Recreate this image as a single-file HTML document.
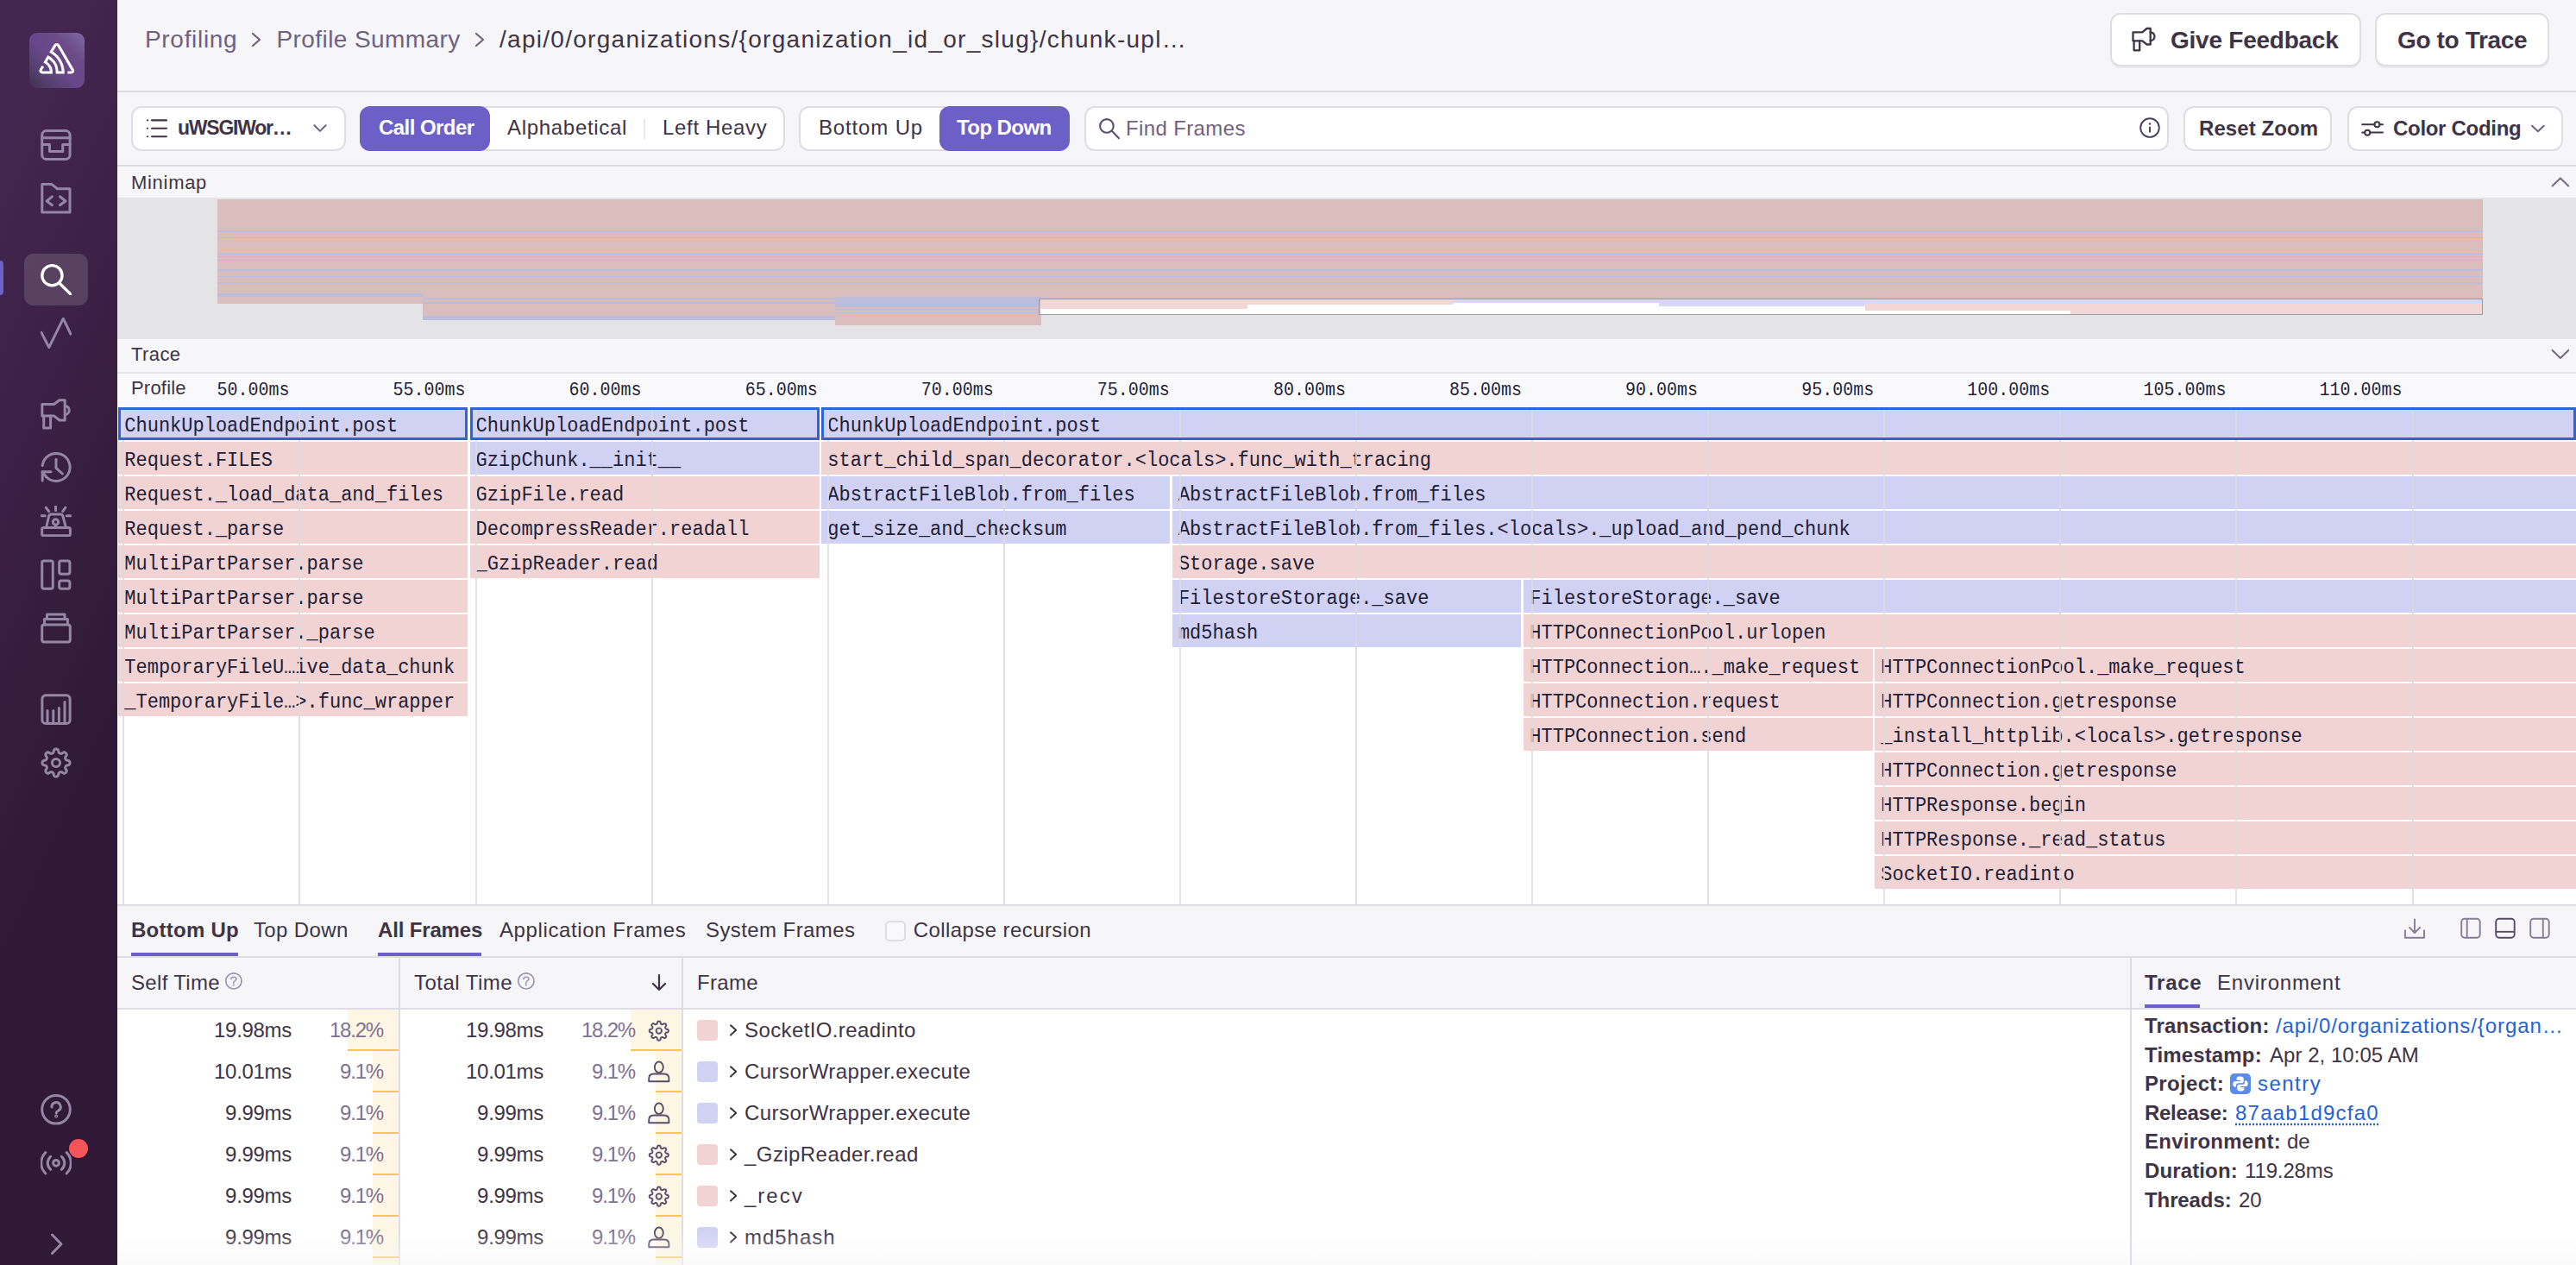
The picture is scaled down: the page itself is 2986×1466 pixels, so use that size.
<!DOCTYPE html>
<html><head><meta charset="utf-8"><title>Profiling</title>
<style>
html,body{margin:0;padding:0;width:2986px;height:1466px;overflow:hidden;background:#ffffff;}
body{position:relative;font-family:'Liberation Sans',sans-serif;}
</style></head><body>
<div style="position:absolute;left:136px;top:0px;width:2850px;height:106px;background:#f6f6f8;"></div>
<div style="position:absolute;left:136px;top:105px;width:2850px;height:2px;background:#e0dce5;"></div>
<div style="position:absolute;left:136px;top:107px;width:2850px;height:85px;background:#f6f6f8;"></div>
<div style="position:absolute;left:136px;top:191px;width:2850px;height:2px;background:#e0dce5;"></div>
<div style="position:absolute;left:168.0px;top:31.7px;font-family:'Liberation Sans', sans-serif;font-size:28px;line-height:28px;font-weight:400;color:#6f6180;white-space:pre;letter-spacing:0.686px;">Profiling</div>
<svg style="position:absolute;left:290px;top:37px;" width="14" height="18" viewBox="0 0 14 18"><path d="M3 2 L11 9 L3 16" fill="none" stroke="#6f6180" stroke-width="2.2" stroke-linecap="round" stroke-linejoin="round"/></svg>
<div style="position:absolute;left:320.5px;top:31.7px;font-family:'Liberation Sans', sans-serif;font-size:28px;line-height:28px;font-weight:400;color:#6f6180;white-space:pre;letter-spacing:0.416px;">Profile Summary</div>
<svg style="position:absolute;left:549px;top:37px;" width="14" height="18" viewBox="0 0 14 18"><path d="M3 2 L11 9 L3 16" fill="none" stroke="#6f6180" stroke-width="2.2" stroke-linecap="round" stroke-linejoin="round"/></svg>
<div style="position:absolute;left:579.0px;top:31.7px;font-family:'Liberation Sans', sans-serif;font-size:28px;line-height:28px;font-weight:400;color:#3e3446;white-space:pre;letter-spacing:1.284px;">/api/0/organizations/{organization_id_or_slug}/chunk-upl…</div>
<div style="position:absolute;left:2446px;top:15px;width:287px;height:58px;border:2px solid #e0dce5;border-radius:12px;background:#fff;box-shadow:0 2px 0 rgba(43,34,51,0.06);"></div>
<svg style="position:absolute;left:2470px;top:31px;" width="30" height="30" viewBox="0 0 30 30"><g fill="none" stroke="#3e3446" stroke-width="2.3" stroke-linejoin="round" stroke-linecap="round"><path d="M2.5 6.3 H13.3 L18.5 2 H22.7 V20.5 H18.5 L13.3 16.4 H2.5 Z"/><path d="M3.6 16.4 V27.3 H10.2 V16.4"/><path d="M22.7 6.5 A4.8 4.8 0 0 1 22.7 16.1"/></g></svg>
<div style="position:absolute;left:2516.0px;top:33.2px;font-family:'Liberation Sans', sans-serif;font-size:28px;line-height:28px;font-weight:700;color:#3e3446;white-space:pre;letter-spacing:-0.241px;">Give Feedback</div>
<div style="position:absolute;left:2753px;top:15px;width:198px;height:58px;border:2px solid #e0dce5;border-radius:12px;background:#fff;box-shadow:0 2px 0 rgba(43,34,51,0.06);"></div>
<div style="position:absolute;left:2779.0px;top:33.2px;font-family:'Liberation Sans', sans-serif;font-size:28px;line-height:28px;font-weight:700;color:#3e3446;white-space:pre;letter-spacing:-0.359px;">Go to Trace</div>
<div style="position:absolute;left:152px;top:123px;width:245px;height:48px;border:2px solid #e0dce5;border-radius:12px;background:#fff;"></div>
<svg style="position:absolute;left:168px;top:136px;" width="28" height="26" viewBox="0 0 28 26"><g stroke="#3e3446" stroke-width="2.1" stroke-linecap="round"><line x1="3" y1="3.4" x2="3.05" y2="3.4"/><line x1="3" y1="12.8" x2="3.05" y2="12.8"/><line x1="3" y1="22.3" x2="3.05" y2="22.3"/><line x1="8" y1="3.4" x2="25" y2="3.4"/><line x1="8" y1="12.8" x2="25" y2="12.8"/><line x1="8" y1="22.3" x2="25" y2="22.3"/></g></svg>
<div style="position:absolute;left:206.0px;top:137.4px;font-family:'Liberation Sans', sans-serif;font-size:23px;line-height:23px;font-weight:700;color:#3e3446;white-space:pre;letter-spacing:-1.233px;">uWSGIWor…</div>
<svg style="position:absolute;left:363px;top:144px;" width="16" height="11" viewBox="0 0 16 11"><path d="M1.4 1.2 L8 7.9 L14.6 1.2" fill="none" stroke="#6f6280" stroke-width="2" stroke-linecap="round" stroke-linejoin="round"/></svg>
<div style="position:absolute;left:417px;top:123px;width:489px;height:48px;border:2px solid #e0dce5;border-radius:12px;background:#fff;"></div>
<div style="position:absolute;left:417px;top:123px;width:151px;height:52px;border-radius:12px;background:#6c5fc7;"></div>
<div style="position:absolute;left:439.0px;top:135.6px;font-family:'Liberation Sans', sans-serif;font-size:24px;line-height:24px;font-weight:700;color:#fff;white-space:pre;letter-spacing:-0.552px;">Call Order</div>
<div style="position:absolute;left:588.0px;top:135.6px;font-family:'Liberation Sans', sans-serif;font-size:24px;line-height:24px;font-weight:400;color:#3e3446;white-space:pre;letter-spacing:0.692px;">Alphabetical</div>
<div style="position:absolute;left:746px;top:138px;width:2px;height:23px;background:#ebe6ef;"></div>
<div style="position:absolute;left:768.0px;top:135.6px;font-family:'Liberation Sans', sans-serif;font-size:24px;line-height:24px;font-weight:400;color:#3e3446;white-space:pre;letter-spacing:0.672px;">Left Heavy</div>
<div style="position:absolute;left:926px;top:123px;width:310px;height:48px;border:2px solid #e0dce5;border-radius:12px;background:#fff;"></div>
<div style="position:absolute;left:1089px;top:123px;width:151px;height:52px;border-radius:12px;background:#6c5fc7;"></div>
<div style="position:absolute;left:949.0px;top:135.6px;font-family:'Liberation Sans', sans-serif;font-size:24px;line-height:24px;font-weight:400;color:#3e3446;white-space:pre;letter-spacing:0.849px;">Bottom Up</div>
<div style="position:absolute;left:1109.0px;top:135.6px;font-family:'Liberation Sans', sans-serif;font-size:24px;line-height:24px;font-weight:700;color:#fff;white-space:pre;letter-spacing:-0.572px;">Top Down</div>
<div style="position:absolute;left:1257px;top:123px;width:1253px;height:48px;border:2px solid #e0dce5;border-radius:12px;background:#fff;"></div>
<svg style="position:absolute;left:1272px;top:136px;" width="28" height="26" viewBox="0 0 28 26"><g fill="none" stroke="#5c4f6e" stroke-width="2.1" stroke-linecap="round"><circle cx="10.9" cy="9.9" r="7.8"/><line x1="16.6" y1="15.6" x2="25" y2="24.2"/></g></svg>
<div style="position:absolute;left:1305.0px;top:136.6px;font-family:'Liberation Sans', sans-serif;font-size:24px;line-height:24px;font-weight:400;color:#6f6180;white-space:pre;letter-spacing:0.368px;">Find Frames</div>
<svg style="position:absolute;left:2479px;top:136px;" width="26" height="26" viewBox="0 0 26 26"><circle cx="13" cy="12.1" r="10.8" fill="none" stroke="#4e4160" stroke-width="1.9"/><rect x="12" y="10.4" width="2" height="7.4" rx="1" fill="#4e4160"/><circle cx="13" cy="7.4" r="1.25" fill="#4e4160"/></svg>
<div style="position:absolute;left:2531px;top:123px;width:168px;height:48px;border:2px solid #e0dce5;border-radius:12px;background:#fff;"></div>
<div style="position:absolute;left:2549.0px;top:136.6px;font-family:'Liberation Sans', sans-serif;font-size:24px;line-height:24px;font-weight:700;color:#3e3446;white-space:pre;letter-spacing:0.080px;">Reset Zoom</div>
<div style="position:absolute;left:2721px;top:123px;width:246px;height:48px;border:2px solid #e0dce5;border-radius:12px;background:#fff;"></div>
<svg style="position:absolute;left:2735px;top:138px;" width="30" height="24" viewBox="0 0 30 24"><g fill="none" stroke="#3e3446" stroke-width="2" stroke-linecap="round"><line x1="3.2" y1="6.2" x2="17.4" y2="6.2"/><line x1="23.4" y1="6.2" x2="27" y2="6.2"/><line x1="3.2" y1="15.6" x2="6.2" y2="15.6"/><line x1="12.2" y1="15.6" x2="27" y2="15.6"/></g><circle cx="20.4" cy="6.2" r="3" fill="none" stroke="#3e3446" stroke-width="2"/><circle cx="9.2" cy="15.8" r="3" fill="none" stroke="#3e3446" stroke-width="2"/></svg>
<div style="position:absolute;left:2774.0px;top:136.6px;font-family:'Liberation Sans', sans-serif;font-size:24px;line-height:24px;font-weight:700;color:#3e3446;white-space:pre;letter-spacing:-0.299px;">Color Coding</div>
<svg style="position:absolute;left:2933px;top:144px;" width="18" height="11" viewBox="0 0 18 11"><path d="M2 1.8 L8.9 8.3 L15.8 1.8" fill="none" stroke="#6f6280" stroke-width="2" stroke-linecap="round" stroke-linejoin="round"/></svg>
<div style="position:absolute;left:136px;top:193px;width:2850px;height:36px;background:#f7f7f9;"></div>
<div style="position:absolute;left:152.0px;top:201.3px;font-family:'Liberation Sans', sans-serif;font-size:22px;line-height:22px;font-weight:400;color:#3e3446;white-space:pre;letter-spacing:0.700px;">Minimap</div>
<svg style="position:absolute;left:2956px;top:203px;" width="24" height="16" viewBox="0 0 24 16"><path d="M2.6 12.4 L11.9 3.4 L21.2 12.4" fill="none" stroke="#776a86" stroke-width="2.1" stroke-linecap="round" stroke-linejoin="round"/></svg>
<div style="position:absolute;left:136px;top:229px;width:2850px;height:164px;background:#e4e4e7;"></div>
<div style="position:absolute;left:252px;top:231px;width:2626px;height:121px;background:#dabdbd;"></div>
<div style="position:absolute;left:252px;top:267px;width:2626px;height:2px;background:#bcbcdc;"></div>
<div style="position:absolute;left:252px;top:275px;width:2626px;height:1px;background:#bcbcdc;"></div>
<div style="position:absolute;left:252px;top:294px;width:2626px;height:1px;background:#bcbcdc;"></div>
<div style="position:absolute;left:252px;top:297px;width:2626px;height:1px;background:#bcbcdc;"></div>
<div style="position:absolute;left:252px;top:301px;width:2626px;height:1px;background:#bcbcdc;"></div>
<div style="position:absolute;left:252px;top:312px;width:2626px;height:2px;background:#bcbcdc;"></div>
<div style="position:absolute;left:252px;top:320px;width:2626px;height:1px;background:#bcbcdc;"></div>
<div style="position:absolute;left:252px;top:327px;width:2626px;height:2px;background:#bcbcdc;"></div>
<div style="position:absolute;left:252px;top:340px;width:238px;height:4px;background:#bcbcdc;"></div>
<div style="position:absolute;left:490px;top:352px;width:478px;height:19px;background:#dabdbd;"></div>
<div style="position:absolute;left:490px;top:345px;width:2388px;height:2px;background:#bcbcdc;"></div>
<div style="position:absolute;left:490px;top:350px;width:2388px;height:2px;background:#bcbcdc;"></div>
<div style="position:absolute;left:490px;top:366px;width:478px;height:5px;background:#bcbcdc;"></div>
<div style="position:absolute;left:968px;top:344px;width:239px;height:12px;background:#bcbcdc;"></div>
<div style="position:absolute;left:968px;top:356px;width:239px;height:21px;background:#dabdbd;"></div>
<div style="position:absolute;left:968px;top:358px;width:239px;height:2px;background:#bcbcdc;"></div>
<div style="position:absolute;left:968px;top:362px;width:239px;height:1px;background:#bcbcdc;"></div>
<div style="position:absolute;left:1206px;top:347px;width:1672px;height:18px;background:#f3d6d6;"></div>
<div style="position:absolute;left:1206px;top:358px;width:240px;height:7px;background:#fff;"></div>
<div style="position:absolute;left:1446px;top:353px;width:239px;height:12px;background:#fff;"></div>
<div style="position:absolute;left:1685px;top:347px;width:238px;height:4px;background:#d8d8f4;"></div>
<div style="position:absolute;left:1685px;top:351px;width:238px;height:14px;background:#fff;"></div>
<div style="position:absolute;left:1923px;top:347px;width:239px;height:8px;background:#d8d8f4;"></div>
<div style="position:absolute;left:1923px;top:355px;width:239px;height:10px;background:#fff;"></div>
<div style="position:absolute;left:2162px;top:347px;width:716px;height:4px;background:#d8d8f4;"></div>
<div style="position:absolute;left:2162px;top:360px;width:238px;height:5px;background:#fff;"></div>
<div style="position:absolute;left:1204px;top:346px;width:1672px;height:17px;border:1.5px solid #a09aa8;"></div>
<div style="position:absolute;left:136px;top:393px;width:2850px;height:38px;background:#f7f7f9;"></div>
<div style="position:absolute;left:152.0px;top:400.3px;font-family:'Liberation Sans', sans-serif;font-size:22px;line-height:22px;font-weight:400;color:#3e3446;white-space:pre;letter-spacing:0.405px;">Trace</div>
<svg style="position:absolute;left:2956px;top:402px;" width="24" height="16" viewBox="0 0 24 16"><path d="M2.6 3.9 L11.9 12.9 L21.2 3.9" fill="none" stroke="#776a86" stroke-width="2.1" stroke-linecap="round" stroke-linejoin="round"/></svg>
<div style="position:absolute;left:136px;top:431px;width:2850px;height:2px;background:#e7e5ea;"></div>
<div style="position:absolute;left:136px;top:433px;width:2850px;height:38px;background:#f9f9fb;"></div>
<div style="position:absolute;left:152.0px;top:439.3px;font-family:'Liberation Sans', sans-serif;font-size:22px;line-height:22px;font-weight:400;color:#3e3446;white-space:pre;letter-spacing:0.197px;">Profile</div>
<div style="position:absolute;left:251.4px;top:443.0px;font-family:'Liberation Mono', monospace;font-size:20px;line-height:20px;font-weight:400;color:#1f2237;white-space:pre;transform:scaleY(1.08);transform-origin:0 15.2px;">50.00ms</div>
<div style="position:absolute;left:455.5px;top:443.0px;font-family:'Liberation Mono', monospace;font-size:20px;line-height:20px;font-weight:400;color:#1f2237;white-space:pre;transform:scaleY(1.08);transform-origin:0 15.2px;">55.00ms</div>
<div style="position:absolute;left:659.6px;top:443.0px;font-family:'Liberation Mono', monospace;font-size:20px;line-height:20px;font-weight:400;color:#1f2237;white-space:pre;transform:scaleY(1.08);transform-origin:0 15.2px;">60.00ms</div>
<div style="position:absolute;left:863.7px;top:443.0px;font-family:'Liberation Mono', monospace;font-size:20px;line-height:20px;font-weight:400;color:#1f2237;white-space:pre;transform:scaleY(1.08);transform-origin:0 15.2px;">65.00ms</div>
<div style="position:absolute;left:1067.8px;top:443.0px;font-family:'Liberation Mono', monospace;font-size:20px;line-height:20px;font-weight:400;color:#1f2237;white-space:pre;transform:scaleY(1.08);transform-origin:0 15.2px;">70.00ms</div>
<div style="position:absolute;left:1271.8px;top:443.0px;font-family:'Liberation Mono', monospace;font-size:20px;line-height:20px;font-weight:400;color:#1f2237;white-space:pre;transform:scaleY(1.08);transform-origin:0 15.2px;">75.00ms</div>
<div style="position:absolute;left:1475.9px;top:443.0px;font-family:'Liberation Mono', monospace;font-size:20px;line-height:20px;font-weight:400;color:#1f2237;white-space:pre;transform:scaleY(1.08);transform-origin:0 15.2px;">80.00ms</div>
<div style="position:absolute;left:1680.0px;top:443.0px;font-family:'Liberation Mono', monospace;font-size:20px;line-height:20px;font-weight:400;color:#1f2237;white-space:pre;transform:scaleY(1.08);transform-origin:0 15.2px;">85.00ms</div>
<div style="position:absolute;left:1884.1px;top:443.0px;font-family:'Liberation Mono', monospace;font-size:20px;line-height:20px;font-weight:400;color:#1f2237;white-space:pre;transform:scaleY(1.08);transform-origin:0 15.2px;">90.00ms</div>
<div style="position:absolute;left:2088.2px;top:443.0px;font-family:'Liberation Mono', monospace;font-size:20px;line-height:20px;font-weight:400;color:#1f2237;white-space:pre;transform:scaleY(1.08);transform-origin:0 15.2px;">95.00ms</div>
<div style="position:absolute;left:2280.3px;top:443.0px;font-family:'Liberation Mono', monospace;font-size:20px;line-height:20px;font-weight:400;color:#1f2237;white-space:pre;transform:scaleY(1.08);transform-origin:0 15.2px;">100.00ms</div>
<div style="position:absolute;left:2484.4px;top:443.0px;font-family:'Liberation Mono', monospace;font-size:20px;line-height:20px;font-weight:400;color:#1f2237;white-space:pre;transform:scaleY(1.08);transform-origin:0 15.2px;">105.00ms</div>
<div style="position:absolute;left:2688.5px;top:443.0px;font-family:'Liberation Mono', monospace;font-size:20px;line-height:20px;font-weight:400;color:#1f2237;white-space:pre;transform:scaleY(1.08);transform-origin:0 15.2px;">110.00ms</div>
<div style="position:absolute;left:136px;top:471px;width:2850px;height:577px;background:#ffffff;"></div>
<div style="position:absolute;left:137.3px;top:472px;width:404.6px;height:38px;background:#d1d1f4;"></div>
<div style="position:absolute;left:544.6px;top:472px;width:405.2px;height:38px;background:#d1d1f4;"></div>
<div style="position:absolute;left:952.3px;top:472px;width:2033.7px;height:38px;background:#d1d1f4;"></div>
<div style="position:absolute;left:137.3px;top:512px;width:404.6px;height:38px;background:#f2d3d3;"></div>
<div style="position:absolute;left:544.6px;top:512px;width:405.2px;height:38px;background:#d1d1f4;"></div>
<div style="position:absolute;left:952.3px;top:512px;width:2033.7px;height:38px;background:#f2d3d3;"></div>
<div style="position:absolute;left:137.3px;top:552px;width:404.6px;height:38px;background:#f2d3d3;"></div>
<div style="position:absolute;left:544.6px;top:552px;width:405.2px;height:38px;background:#f2d3d3;"></div>
<div style="position:absolute;left:952.3px;top:552px;width:404.2px;height:38px;background:#d1d1f4;"></div>
<div style="position:absolute;left:1358.9px;top:552px;width:1627.1px;height:38px;background:#d1d1f4;"></div>
<div style="position:absolute;left:137.3px;top:592px;width:404.6px;height:38px;background:#f2d3d3;"></div>
<div style="position:absolute;left:544.6px;top:592px;width:405.2px;height:38px;background:#f2d3d3;"></div>
<div style="position:absolute;left:952.3px;top:592px;width:404.2px;height:38px;background:#d1d1f4;"></div>
<div style="position:absolute;left:1358.9px;top:592px;width:1627.1px;height:38px;background:#d1d1f4;"></div>
<div style="position:absolute;left:137.3px;top:632px;width:404.6px;height:38px;background:#f2d3d3;"></div>
<div style="position:absolute;left:544.6px;top:632px;width:405.2px;height:38px;background:#f2d3d3;"></div>
<div style="position:absolute;left:1358.9px;top:632px;width:1627.1px;height:38px;background:#f2d3d3;"></div>
<div style="position:absolute;left:137.3px;top:672px;width:404.6px;height:38px;background:#f2d3d3;"></div>
<div style="position:absolute;left:1358.9px;top:672px;width:404.6px;height:38px;background:#d1d1f4;"></div>
<div style="position:absolute;left:1766.3px;top:672px;width:1219.7px;height:38px;background:#d1d1f4;"></div>
<div style="position:absolute;left:137.3px;top:712px;width:404.6px;height:38px;background:#f2d3d3;"></div>
<div style="position:absolute;left:1358.9px;top:712px;width:404.6px;height:38px;background:#d1d1f4;"></div>
<div style="position:absolute;left:1766.3px;top:712px;width:1219.7px;height:38px;background:#f2d3d3;"></div>
<div style="position:absolute;left:137.3px;top:752px;width:404.6px;height:38px;background:#f2d3d3;"></div>
<div style="position:absolute;left:1766.3px;top:752px;width:404.5px;height:38px;background:#f2d3d3;"></div>
<div style="position:absolute;left:2173.3px;top:752px;width:812.7px;height:38px;background:#f2d3d3;"></div>
<div style="position:absolute;left:137.3px;top:792px;width:404.6px;height:38px;background:#f2d3d3;"></div>
<div style="position:absolute;left:1766.3px;top:792px;width:404.5px;height:38px;background:#f2d3d3;"></div>
<div style="position:absolute;left:2173.3px;top:792px;width:812.7px;height:38px;background:#f2d3d3;"></div>
<div style="position:absolute;left:1766.3px;top:832px;width:404.5px;height:38px;background:#f2d3d3;"></div>
<div style="position:absolute;left:2173.3px;top:832px;width:812.7px;height:38px;background:#f2d3d3;"></div>
<div style="position:absolute;left:2173.3px;top:872px;width:812.7px;height:38px;background:#f2d3d3;"></div>
<div style="position:absolute;left:2173.3px;top:912px;width:812.7px;height:38px;background:#f2d3d3;"></div>
<div style="position:absolute;left:2173.3px;top:952px;width:812.7px;height:38px;background:#f2d3d3;"></div>
<div style="position:absolute;left:2173.3px;top:992px;width:812.7px;height:38px;background:#f2d3d3;"></div>
<div style="position:absolute;left:144.3px;top:483.9px;font-family:'Liberation Mono', monospace;font-size:22px;line-height:22px;font-weight:400;color:#1d2036;white-space:pre;transform:scaleY(1.06);transform-origin:0 16.7px;">ChunkUploadEndpoint.post</div>
<div style="position:absolute;left:551.6px;top:483.9px;font-family:'Liberation Mono', monospace;font-size:22px;line-height:22px;font-weight:400;color:#1d2036;white-space:pre;transform:scaleY(1.06);transform-origin:0 16.7px;">ChunkUploadEndpoint.post</div>
<div style="position:absolute;left:959.3px;top:483.9px;font-family:'Liberation Mono', monospace;font-size:22px;line-height:22px;font-weight:400;color:#1d2036;white-space:pre;transform:scaleY(1.06);transform-origin:0 16.7px;">ChunkUploadEndpoint.post</div>
<div style="position:absolute;left:144.3px;top:523.9px;font-family:'Liberation Mono', monospace;font-size:22px;line-height:22px;font-weight:400;color:#1d2036;white-space:pre;transform:scaleY(1.06);transform-origin:0 16.7px;">Request.FILES</div>
<div style="position:absolute;left:551.6px;top:523.9px;font-family:'Liberation Mono', monospace;font-size:22px;line-height:22px;font-weight:400;color:#1d2036;white-space:pre;transform:scaleY(1.06);transform-origin:0 16.7px;">GzipChunk.__init__</div>
<div style="position:absolute;left:959.3px;top:523.9px;font-family:'Liberation Mono', monospace;font-size:22px;line-height:22px;font-weight:400;color:#1d2036;white-space:pre;transform:scaleY(1.06);transform-origin:0 16.7px;">start_child_span_decorator.&lt;locals&gt;.func_with_tracing</div>
<div style="position:absolute;left:144.3px;top:563.9px;font-family:'Liberation Mono', monospace;font-size:22px;line-height:22px;font-weight:400;color:#1d2036;white-space:pre;transform:scaleY(1.06);transform-origin:0 16.7px;">Request._load_data_and_files</div>
<div style="position:absolute;left:551.6px;top:563.9px;font-family:'Liberation Mono', monospace;font-size:22px;line-height:22px;font-weight:400;color:#1d2036;white-space:pre;transform:scaleY(1.06);transform-origin:0 16.7px;">GzipFile.read</div>
<div style="position:absolute;left:959.3px;top:563.9px;font-family:'Liberation Mono', monospace;font-size:22px;line-height:22px;font-weight:400;color:#1d2036;white-space:pre;transform:scaleY(1.06);transform-origin:0 16.7px;">AbstractFileBlob.from_files</div>
<div style="position:absolute;left:1365.9px;top:563.9px;font-family:'Liberation Mono', monospace;font-size:22px;line-height:22px;font-weight:400;color:#1d2036;white-space:pre;transform:scaleY(1.06);transform-origin:0 16.7px;">AbstractFileBlob.from_files</div>
<div style="position:absolute;left:144.3px;top:603.9px;font-family:'Liberation Mono', monospace;font-size:22px;line-height:22px;font-weight:400;color:#1d2036;white-space:pre;transform:scaleY(1.06);transform-origin:0 16.7px;">Request._parse</div>
<div style="position:absolute;left:551.6px;top:603.9px;font-family:'Liberation Mono', monospace;font-size:22px;line-height:22px;font-weight:400;color:#1d2036;white-space:pre;transform:scaleY(1.06);transform-origin:0 16.7px;">DecompressReader.readall</div>
<div style="position:absolute;left:959.3px;top:603.9px;font-family:'Liberation Mono', monospace;font-size:22px;line-height:22px;font-weight:400;color:#1d2036;white-space:pre;transform:scaleY(1.06);transform-origin:0 16.7px;">get_size_and_checksum</div>
<div style="position:absolute;left:1365.9px;top:603.9px;font-family:'Liberation Mono', monospace;font-size:22px;line-height:22px;font-weight:400;color:#1d2036;white-space:pre;transform:scaleY(1.06);transform-origin:0 16.7px;">AbstractFileBlob.from_files.&lt;locals&gt;._upload_and_pend_chunk</div>
<div style="position:absolute;left:144.3px;top:643.9px;font-family:'Liberation Mono', monospace;font-size:22px;line-height:22px;font-weight:400;color:#1d2036;white-space:pre;transform:scaleY(1.06);transform-origin:0 16.7px;">MultiPartParser.parse</div>
<div style="position:absolute;left:551.6px;top:643.9px;font-family:'Liberation Mono', monospace;font-size:22px;line-height:22px;font-weight:400;color:#1d2036;white-space:pre;transform:scaleY(1.06);transform-origin:0 16.7px;">_GzipReader.read</div>
<div style="position:absolute;left:1365.9px;top:643.9px;font-family:'Liberation Mono', monospace;font-size:22px;line-height:22px;font-weight:400;color:#1d2036;white-space:pre;transform:scaleY(1.06);transform-origin:0 16.7px;">Storage.save</div>
<div style="position:absolute;left:144.3px;top:683.9px;font-family:'Liberation Mono', monospace;font-size:22px;line-height:22px;font-weight:400;color:#1d2036;white-space:pre;transform:scaleY(1.06);transform-origin:0 16.7px;">MultiPartParser.parse</div>
<div style="position:absolute;left:1365.9px;top:683.9px;font-family:'Liberation Mono', monospace;font-size:22px;line-height:22px;font-weight:400;color:#1d2036;white-space:pre;transform:scaleY(1.06);transform-origin:0 16.7px;">FilestoreStorage._save</div>
<div style="position:absolute;left:1773.3px;top:683.9px;font-family:'Liberation Mono', monospace;font-size:22px;line-height:22px;font-weight:400;color:#1d2036;white-space:pre;transform:scaleY(1.06);transform-origin:0 16.7px;">FilestoreStorage._save</div>
<div style="position:absolute;left:144.3px;top:723.9px;font-family:'Liberation Mono', monospace;font-size:22px;line-height:22px;font-weight:400;color:#1d2036;white-space:pre;transform:scaleY(1.06);transform-origin:0 16.7px;">MultiPartParser._parse</div>
<div style="position:absolute;left:1365.9px;top:723.9px;font-family:'Liberation Mono', monospace;font-size:22px;line-height:22px;font-weight:400;color:#1d2036;white-space:pre;transform:scaleY(1.06);transform-origin:0 16.7px;">md5hash</div>
<div style="position:absolute;left:1773.3px;top:723.9px;font-family:'Liberation Mono', monospace;font-size:22px;line-height:22px;font-weight:400;color:#1d2036;white-space:pre;transform:scaleY(1.06);transform-origin:0 16.7px;">HTTPConnectionPool.urlopen</div>
<div style="position:absolute;left:144.3px;top:763.9px;font-family:'Liberation Mono', monospace;font-size:22px;line-height:22px;font-weight:400;color:#1d2036;white-space:pre;transform:scaleY(1.06);transform-origin:0 16.7px;">TemporaryFileU…ive_data_chunk</div>
<div style="position:absolute;left:1773.3px;top:763.9px;font-family:'Liberation Mono', monospace;font-size:22px;line-height:22px;font-weight:400;color:#1d2036;white-space:pre;transform:scaleY(1.06);transform-origin:0 16.7px;">HTTPConnection…._make_request</div>
<div style="position:absolute;left:2180.3px;top:763.9px;font-family:'Liberation Mono', monospace;font-size:22px;line-height:22px;font-weight:400;color:#1d2036;white-space:pre;transform:scaleY(1.06);transform-origin:0 16.7px;">HTTPConnectionPool._make_request</div>
<div style="position:absolute;left:144.3px;top:803.9px;font-family:'Liberation Mono', monospace;font-size:22px;line-height:22px;font-weight:400;color:#1d2036;white-space:pre;transform:scaleY(1.06);transform-origin:0 16.7px;">_TemporaryFile…&gt;.func_wrapper</div>
<div style="position:absolute;left:1773.3px;top:803.9px;font-family:'Liberation Mono', monospace;font-size:22px;line-height:22px;font-weight:400;color:#1d2036;white-space:pre;transform:scaleY(1.06);transform-origin:0 16.7px;">HTTPConnection.request</div>
<div style="position:absolute;left:2180.3px;top:803.9px;font-family:'Liberation Mono', monospace;font-size:22px;line-height:22px;font-weight:400;color:#1d2036;white-space:pre;transform:scaleY(1.06);transform-origin:0 16.7px;">HTTPConnection.getresponse</div>
<div style="position:absolute;left:1773.3px;top:843.9px;font-family:'Liberation Mono', monospace;font-size:22px;line-height:22px;font-weight:400;color:#1d2036;white-space:pre;transform:scaleY(1.06);transform-origin:0 16.7px;">HTTPConnection.send</div>
<div style="position:absolute;left:2180.3px;top:843.9px;font-family:'Liberation Mono', monospace;font-size:22px;line-height:22px;font-weight:400;color:#1d2036;white-space:pre;transform:scaleY(1.06);transform-origin:0 16.7px;">_install_httplib.&lt;locals&gt;.getresponse</div>
<div style="position:absolute;left:2180.3px;top:883.9px;font-family:'Liberation Mono', monospace;font-size:22px;line-height:22px;font-weight:400;color:#1d2036;white-space:pre;transform:scaleY(1.06);transform-origin:0 16.7px;">HTTPConnection.getresponse</div>
<div style="position:absolute;left:2180.3px;top:923.9px;font-family:'Liberation Mono', monospace;font-size:22px;line-height:22px;font-weight:400;color:#1d2036;white-space:pre;transform:scaleY(1.06);transform-origin:0 16.7px;">HTTPResponse.begin</div>
<div style="position:absolute;left:2180.3px;top:963.9px;font-family:'Liberation Mono', monospace;font-size:22px;line-height:22px;font-weight:400;color:#1d2036;white-space:pre;transform:scaleY(1.06);transform-origin:0 16.7px;">HTTPResponse._read_status</div>
<div style="position:absolute;left:2180.3px;top:1003.9px;font-family:'Liberation Mono', monospace;font-size:22px;line-height:22px;font-weight:400;color:#1d2036;white-space:pre;transform:scaleY(1.06);transform-origin:0 16.7px;">SocketIO.readinto</div>
<div style="position:absolute;left:142.3px;top:472px;width:2px;height:576px;background:rgba(218,218,224,0.85);"></div>
<div style="position:absolute;left:346.4px;top:472px;width:2px;height:576px;background:rgba(218,218,224,0.85);"></div>
<div style="position:absolute;left:550.5px;top:472px;width:2px;height:576px;background:rgba(218,218,224,0.85);"></div>
<div style="position:absolute;left:754.6px;top:472px;width:2px;height:576px;background:rgba(218,218,224,0.85);"></div>
<div style="position:absolute;left:958.7px;top:472px;width:2px;height:576px;background:rgba(218,218,224,0.85);"></div>
<div style="position:absolute;left:1162.8px;top:472px;width:2px;height:576px;background:rgba(218,218,224,0.85);"></div>
<div style="position:absolute;left:1366.8px;top:472px;width:2px;height:576px;background:rgba(218,218,224,0.85);"></div>
<div style="position:absolute;left:1570.9px;top:472px;width:2px;height:576px;background:rgba(218,218,224,0.85);"></div>
<div style="position:absolute;left:1775.0px;top:472px;width:2px;height:576px;background:rgba(218,218,224,0.85);"></div>
<div style="position:absolute;left:1979.1px;top:472px;width:2px;height:576px;background:rgba(218,218,224,0.85);"></div>
<div style="position:absolute;left:2183.2px;top:472px;width:2px;height:576px;background:rgba(218,218,224,0.85);"></div>
<div style="position:absolute;left:2387.3px;top:472px;width:2px;height:576px;background:rgba(218,218,224,0.85);"></div>
<div style="position:absolute;left:2591.4px;top:472px;width:2px;height:576px;background:rgba(218,218,224,0.85);"></div>
<div style="position:absolute;left:2795.5px;top:472px;width:2px;height:576px;background:rgba(218,218,224,0.85);"></div>
<div style="position:absolute;left:137.3px;top:472px;width:398.6px;height:32px;border:3px solid #2c66d6;"></div>
<div style="position:absolute;left:544.6px;top:472px;width:399.2px;height:32px;border:3px solid #2c66d6;"></div>
<div style="position:absolute;left:952.3px;top:472px;width:2027.7px;height:32px;border:3px solid #2c66d6;"></div>
<div style="position:absolute;left:136px;top:1048px;width:2850px;height:2px;background:#e0dce5;"></div>
<div style="position:absolute;left:136px;top:1050px;width:2850px;height:58px;background:#f6f6f8;"></div>
<div style="position:absolute;left:152.0px;top:1065.6px;font-family:'Liberation Sans', sans-serif;font-size:24px;line-height:24px;font-weight:700;color:#3e3446;white-space:pre;letter-spacing:0.255px;">Bottom Up</div>
<div style="position:absolute;left:152px;top:1104px;width:124px;height:4px;background:#6c5fc7;"></div>
<div style="position:absolute;left:294.0px;top:1065.6px;font-family:'Liberation Sans', sans-serif;font-size:24px;line-height:24px;font-weight:400;color:#3e3446;white-space:pre;letter-spacing:0.364px;">Top Down</div>
<div style="position:absolute;left:438.0px;top:1065.6px;font-family:'Liberation Sans', sans-serif;font-size:24px;line-height:24px;font-weight:700;color:#3e3446;white-space:pre;letter-spacing:-0.160px;">All Frames</div>
<div style="position:absolute;left:438px;top:1104px;width:120px;height:4px;background:#6c5fc7;"></div>
<div style="position:absolute;left:579.0px;top:1065.6px;font-family:'Liberation Sans', sans-serif;font-size:24px;line-height:24px;font-weight:400;color:#3e3446;white-space:pre;letter-spacing:0.603px;">Application Frames</div>
<div style="position:absolute;left:818.0px;top:1065.6px;font-family:'Liberation Sans', sans-serif;font-size:24px;line-height:24px;font-weight:400;color:#3e3446;white-space:pre;letter-spacing:0.412px;">System Frames</div>
<div style="position:absolute;left:1026px;top:1067px;width:20px;height:20px;border:2px solid #e0dce5;border-radius:5px;background:#f9f8fb"></div>
<div style="position:absolute;left:1058.7px;top:1065.6px;font-family:'Liberation Sans', sans-serif;font-size:24px;line-height:24px;font-weight:400;color:#3e3446;white-space:pre;letter-spacing:0.424px;">Collapse recursion</div>
<div style="position:absolute;left:136px;top:1108px;width:2850px;height:2px;background:#e0dce5;"></div>
<svg style="position:absolute;left:2784px;top:1060px;" width="30" height="32" viewBox="0 0 30 32"><g fill="none" stroke="#877c96" stroke-width="1.9" stroke-linejoin="round"><path d="M15 4.7 V21 M8.5 14.4 L15 21 L21.6 14.4"/><path d="M3.9 17.5 V26.8 H26 V17.5"/></g></svg>
<svg style="position:absolute;left:2850px;top:1061px;" width="30" height="30" viewBox="0 0 30 30"><g fill="none" stroke="#877c96" stroke-width="1.9"><rect x="3.2" y="3.8" width="21.5" height="21.9" rx="3.6"/><line x1="9.7" y1="3.8" x2="9.7" y2="25.7"/></g></svg>
<svg style="position:absolute;left:2890px;top:1061px;" width="30" height="30" viewBox="0 0 30 30"><g fill="none" stroke="#574a68" stroke-width="1.9"><rect x="3.2" y="3.8" width="21.5" height="21.9" rx="3.6"/><line x1="3.2" y1="18.8" x2="24.7" y2="18.8"/></g></svg>
<svg style="position:absolute;left:2930px;top:1061px;" width="30" height="30" viewBox="0 0 30 30"><g fill="none" stroke="#877c96" stroke-width="1.9"><rect x="3.2" y="3.8" width="21.5" height="21.9" rx="3.6"/><line x1="17.8" y1="3.8" x2="17.8" y2="25.7"/></g></svg>
<div style="position:absolute;left:136px;top:1110px;width:2333px;height:58px;background:#f6f6f8;"></div>
<div style="position:absolute;left:136px;top:1168px;width:2333px;height:2px;background:#e0dce5;"></div>
<div style="position:absolute;left:462px;top:1110px;width:2px;height:356px;background:#e0dce5;"></div>
<div style="position:absolute;left:790px;top:1110px;width:2px;height:356px;background:#e0dce5;"></div>
<div style="position:absolute;left:152.0px;top:1126.6px;font-family:'Liberation Sans', sans-serif;font-size:24px;line-height:24px;font-weight:400;color:#3e3446;white-space:pre;letter-spacing:0.331px;">Self Time</div>
<svg style="position:absolute;left:261px;top:1127px;" width="20" height="20" viewBox="0 0 20 20"><circle cx="9.9" cy="9.9" r="9.1" fill="none" stroke="#9d95b3" stroke-width="1.7"/><path d="M6.9 7.6 Q7.2 5.2 9.9 5.2 Q13 5.2 13 7.3 Q13 8.7 11.1 9.9 Q9.7 10.8 9.7 12.4" fill="none" stroke="#9d95b3" stroke-width="1.6" stroke-linecap="round"/><circle cx="9.8" cy="14.6" r="1.05" fill="#9d95b3"/></svg>
<div style="position:absolute;left:480.0px;top:1126.6px;font-family:'Liberation Sans', sans-serif;font-size:24px;line-height:24px;font-weight:400;color:#3e3446;white-space:pre;letter-spacing:0.478px;">Total Time</div>
<svg style="position:absolute;left:600px;top:1127px;" width="20" height="20" viewBox="0 0 20 20"><circle cx="9.9" cy="9.9" r="9.1" fill="none" stroke="#9d95b3" stroke-width="1.7"/><path d="M6.9 7.6 Q7.2 5.2 9.9 5.2 Q13 5.2 13 7.3 Q13 8.7 11.1 9.9 Q9.7 10.8 9.7 12.4" fill="none" stroke="#9d95b3" stroke-width="1.6" stroke-linecap="round"/><circle cx="9.8" cy="14.6" r="1.05" fill="#9d95b3"/></svg>
<svg style="position:absolute;left:754px;top:1128px;" width="20" height="22" viewBox="0 0 20 22"><path d="M10 2 V19 M3 12 L10 19 L17 12" fill="none" stroke="#3e3446" stroke-width="2.2" stroke-linecap="round" stroke-linejoin="round"/></svg>
<div style="position:absolute;left:808.0px;top:1126.6px;font-family:'Liberation Sans', sans-serif;font-size:24px;line-height:24px;font-weight:400;color:#3e3446;white-space:pre;letter-spacing:0.334px;">Frame</div>
<div style="position:absolute;left:403px;top:1170px;width:59px;height:46px;background:#fdf6e3;"></div>
<div style="position:absolute;left:403px;top:1216px;width:59px;height:2px;background:#f2c94c;"></div>
<div style="position:absolute;left:731px;top:1170px;width:59px;height:46px;background:#fdf6e3;"></div>
<div style="position:absolute;left:731px;top:1216px;width:59px;height:2px;background:#f2c94c;"></div>
<div style="position:absolute;left:140px;top:1181.6px;width:198px;text-align:right;font:400 24px/24px 'Liberation Sans';color:#3e3446;letter-spacing:-0.3px">19.98ms</div>
<div style="position:absolute;left:300px;top:1181.6px;width:144px;text-align:right;font:400 24px/24px 'Liberation Sans';color:#80718f;letter-spacing:-1.2px">18.2%</div>
<div style="position:absolute;left:432px;top:1181.6px;width:198px;text-align:right;font:400 24px/24px 'Liberation Sans';color:#3e3446;letter-spacing:-0.3px">19.98ms</div>
<div style="position:absolute;left:600px;top:1181.6px;width:136px;text-align:right;font:400 24px/24px 'Liberation Sans';color:#80718f;letter-spacing:-1.2px">18.2%</div>
<svg style="position:absolute;left:751.3px;top:1181.6px;" width="26" height="26" viewBox="0 0 26 26"><g fill="none" stroke="#594c6b" stroke-width="1.9" stroke-linejoin="round"><path d="M12.80 1.50 L13.23 1.54 L13.66 1.67 L14.07 1.89 L14.44 2.24 L14.67 3.18 L14.83 4.13 L15.09 4.50 L15.35 4.77 L15.62 4.97 L15.90 5.12 L16.21 5.21 L16.54 5.26 L16.91 5.25 L17.35 5.17 L18.13 4.62 L18.96 4.12 L19.47 4.13 L19.92 4.26 L20.31 4.47 L20.65 4.75 L20.93 5.09 L21.14 5.48 L21.27 5.93 L21.28 6.44 L20.78 7.27 L20.23 8.05 L20.15 8.49 L20.14 8.86 L20.19 9.19 L20.28 9.50 L20.43 9.78 L20.63 10.05 L20.90 10.31 L21.27 10.57 L22.22 10.73 L23.16 10.96 L23.51 11.33 L23.73 11.74 L23.86 12.17 L23.90 12.60 L23.86 13.03 L23.73 13.46 L23.51 13.87 L23.16 14.24 L22.22 14.47 L21.27 14.63 L20.90 14.89 L20.63 15.15 L20.43 15.42 L20.28 15.70 L20.19 16.01 L20.14 16.34 L20.15 16.71 L20.23 17.15 L20.78 17.93 L21.28 18.76 L21.27 19.27 L21.14 19.72 L20.93 20.11 L20.65 20.45 L20.31 20.73 L19.92 20.94 L19.47 21.07 L18.96 21.08 L18.13 20.58 L17.35 20.03 L16.91 19.95 L16.54 19.94 L16.21 19.99 L15.90 20.08 L15.62 20.23 L15.35 20.43 L15.09 20.70 L14.83 21.07 L14.67 22.02 L14.44 22.96 L14.07 23.31 L13.66 23.53 L13.23 23.66 L12.80 23.70 L12.37 23.66 L11.94 23.53 L11.53 23.31 L11.16 22.96 L10.93 22.02 L10.77 21.07 L10.51 20.70 L10.25 20.43 L9.98 20.23 L9.70 20.08 L9.39 19.99 L9.06 19.94 L8.69 19.95 L8.25 20.03 L7.47 20.58 L6.64 21.08 L6.13 21.07 L5.68 20.94 L5.29 20.73 L4.95 20.45 L4.67 20.11 L4.46 19.72 L4.33 19.27 L4.32 18.76 L4.82 17.93 L5.37 17.15 L5.45 16.71 L5.46 16.34 L5.41 16.01 L5.32 15.70 L5.17 15.42 L4.97 15.15 L4.70 14.89 L4.33 14.63 L3.38 14.47 L2.44 14.24 L2.09 13.87 L1.87 13.46 L1.74 13.03 L1.70 12.60 L1.74 12.17 L1.87 11.74 L2.09 11.33 L2.44 10.96 L3.38 10.73 L4.33 10.57 L4.70 10.31 L4.97 10.05 L5.17 9.78 L5.32 9.50 L5.41 9.19 L5.46 8.86 L5.45 8.49 L5.37 8.05 L4.82 7.27 L4.32 6.44 L4.33 5.93 L4.46 5.48 L4.67 5.09 L4.95 4.75 L5.29 4.47 L5.68 4.26 L6.13 4.13 L6.64 4.12 L7.47 4.62 L8.25 5.17 L8.69 5.25 L9.06 5.26 L9.39 5.21 L9.70 5.12 L9.98 4.97 L10.25 4.77 L10.51 4.50 L10.77 4.13 L10.93 3.18 L11.16 2.24 L11.53 1.89 L11.94 1.67 L12.37 1.54 Z"/><circle cx="12.8" cy="12.6" r="3.2"/></g></svg>
<div style="position:absolute;left:808px;top:1182px;width:24px;height:24px;border-radius:4px;background:#f2d3d3"></div>
<svg style="position:absolute;left:843px;top:1186px;" width="14" height="16" viewBox="0 0 14 16"><path d="M4 2.2 L10.2 7.8 L4 13.5" fill="none" stroke="#3e3446" stroke-width="2" stroke-linecap="round" stroke-linejoin="round"/></svg>
<div style="position:absolute;left:863.0px;top:1181.6px;font-family:'Liberation Sans', sans-serif;font-size:24px;line-height:24px;font-weight:400;color:#3e3446;white-space:pre;letter-spacing:0.386px;">SocketIO.readinto</div>
<div style="position:absolute;left:432px;top:1218px;width:30px;height:46px;background:#fdf6e3;"></div>
<div style="position:absolute;left:432px;top:1264px;width:30px;height:2px;background:#f2c94c;"></div>
<div style="position:absolute;left:760px;top:1218px;width:30px;height:46px;background:#fdf6e3;"></div>
<div style="position:absolute;left:760px;top:1264px;width:30px;height:2px;background:#f2c94c;"></div>
<div style="position:absolute;left:140px;top:1229.6px;width:198px;text-align:right;font:400 24px/24px 'Liberation Sans';color:#3e3446;letter-spacing:-0.3px">10.01ms</div>
<div style="position:absolute;left:300px;top:1229.6px;width:144px;text-align:right;font:400 24px/24px 'Liberation Sans';color:#80718f;letter-spacing:-1.2px">9.1%</div>
<div style="position:absolute;left:432px;top:1229.6px;width:198px;text-align:right;font:400 24px/24px 'Liberation Sans';color:#3e3446;letter-spacing:-0.3px">10.01ms</div>
<div style="position:absolute;left:600px;top:1229.6px;width:136px;text-align:right;font:400 24px/24px 'Liberation Sans';color:#80718f;letter-spacing:-1.2px">9.1%</div>
<svg style="position:absolute;left:751px;top:1229px;" width="26" height="26" viewBox="0 0 26 26"><g fill="none" stroke="#594c6b" stroke-width="1.9" stroke-linejoin="round"><ellipse cx="12.8" cy="7.7" rx="5" ry="6.2"/><path d="M1.2 24.3 V21 Q1.2 15.5 6.7 15.5 H18.9 Q24.4 15.5 24.4 21 V24.3 Z"/></g></svg>
<div style="position:absolute;left:808px;top:1230px;width:24px;height:24px;border-radius:4px;background:#d1d1f4"></div>
<svg style="position:absolute;left:843px;top:1234px;" width="14" height="16" viewBox="0 0 14 16"><path d="M4 2.2 L10.2 7.8 L4 13.5" fill="none" stroke="#3e3446" stroke-width="2" stroke-linecap="round" stroke-linejoin="round"/></svg>
<div style="position:absolute;left:863.0px;top:1229.6px;font-family:'Liberation Sans', sans-serif;font-size:24px;line-height:24px;font-weight:400;color:#3e3446;white-space:pre;letter-spacing:0.443px;">CursorWrapper.execute</div>
<div style="position:absolute;left:432px;top:1266px;width:30px;height:46px;background:#fdf6e3;"></div>
<div style="position:absolute;left:432px;top:1312px;width:30px;height:2px;background:#f2c94c;"></div>
<div style="position:absolute;left:760px;top:1266px;width:30px;height:46px;background:#fdf6e3;"></div>
<div style="position:absolute;left:760px;top:1312px;width:30px;height:2px;background:#f2c94c;"></div>
<div style="position:absolute;left:140px;top:1277.6px;width:198px;text-align:right;font:400 24px/24px 'Liberation Sans';color:#3e3446;letter-spacing:-0.3px">9.99ms</div>
<div style="position:absolute;left:300px;top:1277.6px;width:144px;text-align:right;font:400 24px/24px 'Liberation Sans';color:#80718f;letter-spacing:-1.2px">9.1%</div>
<div style="position:absolute;left:432px;top:1277.6px;width:198px;text-align:right;font:400 24px/24px 'Liberation Sans';color:#3e3446;letter-spacing:-0.3px">9.99ms</div>
<div style="position:absolute;left:600px;top:1277.6px;width:136px;text-align:right;font:400 24px/24px 'Liberation Sans';color:#80718f;letter-spacing:-1.2px">9.1%</div>
<svg style="position:absolute;left:751px;top:1277px;" width="26" height="26" viewBox="0 0 26 26"><g fill="none" stroke="#594c6b" stroke-width="1.9" stroke-linejoin="round"><ellipse cx="12.8" cy="7.7" rx="5" ry="6.2"/><path d="M1.2 24.3 V21 Q1.2 15.5 6.7 15.5 H18.9 Q24.4 15.5 24.4 21 V24.3 Z"/></g></svg>
<div style="position:absolute;left:808px;top:1278px;width:24px;height:24px;border-radius:4px;background:#d1d1f4"></div>
<svg style="position:absolute;left:843px;top:1282px;" width="14" height="16" viewBox="0 0 14 16"><path d="M4 2.2 L10.2 7.8 L4 13.5" fill="none" stroke="#3e3446" stroke-width="2" stroke-linecap="round" stroke-linejoin="round"/></svg>
<div style="position:absolute;left:863.0px;top:1277.6px;font-family:'Liberation Sans', sans-serif;font-size:24px;line-height:24px;font-weight:400;color:#3e3446;white-space:pre;letter-spacing:0.443px;">CursorWrapper.execute</div>
<div style="position:absolute;left:432px;top:1314px;width:30px;height:46px;background:#fdf6e3;"></div>
<div style="position:absolute;left:432px;top:1360px;width:30px;height:2px;background:#f2c94c;"></div>
<div style="position:absolute;left:760px;top:1314px;width:30px;height:46px;background:#fdf6e3;"></div>
<div style="position:absolute;left:760px;top:1360px;width:30px;height:2px;background:#f2c94c;"></div>
<div style="position:absolute;left:140px;top:1325.6px;width:198px;text-align:right;font:400 24px/24px 'Liberation Sans';color:#3e3446;letter-spacing:-0.3px">9.99ms</div>
<div style="position:absolute;left:300px;top:1325.6px;width:144px;text-align:right;font:400 24px/24px 'Liberation Sans';color:#80718f;letter-spacing:-1.2px">9.1%</div>
<div style="position:absolute;left:432px;top:1325.6px;width:198px;text-align:right;font:400 24px/24px 'Liberation Sans';color:#3e3446;letter-spacing:-0.3px">9.99ms</div>
<div style="position:absolute;left:600px;top:1325.6px;width:136px;text-align:right;font:400 24px/24px 'Liberation Sans';color:#80718f;letter-spacing:-1.2px">9.1%</div>
<svg style="position:absolute;left:751.3px;top:1325.6px;" width="26" height="26" viewBox="0 0 26 26"><g fill="none" stroke="#594c6b" stroke-width="1.9" stroke-linejoin="round"><path d="M12.80 1.50 L13.23 1.54 L13.66 1.67 L14.07 1.89 L14.44 2.24 L14.67 3.18 L14.83 4.13 L15.09 4.50 L15.35 4.77 L15.62 4.97 L15.90 5.12 L16.21 5.21 L16.54 5.26 L16.91 5.25 L17.35 5.17 L18.13 4.62 L18.96 4.12 L19.47 4.13 L19.92 4.26 L20.31 4.47 L20.65 4.75 L20.93 5.09 L21.14 5.48 L21.27 5.93 L21.28 6.44 L20.78 7.27 L20.23 8.05 L20.15 8.49 L20.14 8.86 L20.19 9.19 L20.28 9.50 L20.43 9.78 L20.63 10.05 L20.90 10.31 L21.27 10.57 L22.22 10.73 L23.16 10.96 L23.51 11.33 L23.73 11.74 L23.86 12.17 L23.90 12.60 L23.86 13.03 L23.73 13.46 L23.51 13.87 L23.16 14.24 L22.22 14.47 L21.27 14.63 L20.90 14.89 L20.63 15.15 L20.43 15.42 L20.28 15.70 L20.19 16.01 L20.14 16.34 L20.15 16.71 L20.23 17.15 L20.78 17.93 L21.28 18.76 L21.27 19.27 L21.14 19.72 L20.93 20.11 L20.65 20.45 L20.31 20.73 L19.92 20.94 L19.47 21.07 L18.96 21.08 L18.13 20.58 L17.35 20.03 L16.91 19.95 L16.54 19.94 L16.21 19.99 L15.90 20.08 L15.62 20.23 L15.35 20.43 L15.09 20.70 L14.83 21.07 L14.67 22.02 L14.44 22.96 L14.07 23.31 L13.66 23.53 L13.23 23.66 L12.80 23.70 L12.37 23.66 L11.94 23.53 L11.53 23.31 L11.16 22.96 L10.93 22.02 L10.77 21.07 L10.51 20.70 L10.25 20.43 L9.98 20.23 L9.70 20.08 L9.39 19.99 L9.06 19.94 L8.69 19.95 L8.25 20.03 L7.47 20.58 L6.64 21.08 L6.13 21.07 L5.68 20.94 L5.29 20.73 L4.95 20.45 L4.67 20.11 L4.46 19.72 L4.33 19.27 L4.32 18.76 L4.82 17.93 L5.37 17.15 L5.45 16.71 L5.46 16.34 L5.41 16.01 L5.32 15.70 L5.17 15.42 L4.97 15.15 L4.70 14.89 L4.33 14.63 L3.38 14.47 L2.44 14.24 L2.09 13.87 L1.87 13.46 L1.74 13.03 L1.70 12.60 L1.74 12.17 L1.87 11.74 L2.09 11.33 L2.44 10.96 L3.38 10.73 L4.33 10.57 L4.70 10.31 L4.97 10.05 L5.17 9.78 L5.32 9.50 L5.41 9.19 L5.46 8.86 L5.45 8.49 L5.37 8.05 L4.82 7.27 L4.32 6.44 L4.33 5.93 L4.46 5.48 L4.67 5.09 L4.95 4.75 L5.29 4.47 L5.68 4.26 L6.13 4.13 L6.64 4.12 L7.47 4.62 L8.25 5.17 L8.69 5.25 L9.06 5.26 L9.39 5.21 L9.70 5.12 L9.98 4.97 L10.25 4.77 L10.51 4.50 L10.77 4.13 L10.93 3.18 L11.16 2.24 L11.53 1.89 L11.94 1.67 L12.37 1.54 Z"/><circle cx="12.8" cy="12.6" r="3.2"/></g></svg>
<div style="position:absolute;left:808px;top:1326px;width:24px;height:24px;border-radius:4px;background:#f2d3d3"></div>
<svg style="position:absolute;left:843px;top:1330px;" width="14" height="16" viewBox="0 0 14 16"><path d="M4 2.2 L10.2 7.8 L4 13.5" fill="none" stroke="#3e3446" stroke-width="2" stroke-linecap="round" stroke-linejoin="round"/></svg>
<div style="position:absolute;left:863.0px;top:1325.6px;font-family:'Liberation Sans', sans-serif;font-size:24px;line-height:24px;font-weight:400;color:#3e3446;white-space:pre;letter-spacing:0.432px;">_GzipReader.read</div>
<div style="position:absolute;left:432px;top:1362px;width:30px;height:46px;background:#fdf6e3;"></div>
<div style="position:absolute;left:432px;top:1408px;width:30px;height:2px;background:#f2c94c;"></div>
<div style="position:absolute;left:760px;top:1362px;width:30px;height:46px;background:#fdf6e3;"></div>
<div style="position:absolute;left:760px;top:1408px;width:30px;height:2px;background:#f2c94c;"></div>
<div style="position:absolute;left:140px;top:1373.6px;width:198px;text-align:right;font:400 24px/24px 'Liberation Sans';color:#3e3446;letter-spacing:-0.3px">9.99ms</div>
<div style="position:absolute;left:300px;top:1373.6px;width:144px;text-align:right;font:400 24px/24px 'Liberation Sans';color:#80718f;letter-spacing:-1.2px">9.1%</div>
<div style="position:absolute;left:432px;top:1373.6px;width:198px;text-align:right;font:400 24px/24px 'Liberation Sans';color:#3e3446;letter-spacing:-0.3px">9.99ms</div>
<div style="position:absolute;left:600px;top:1373.6px;width:136px;text-align:right;font:400 24px/24px 'Liberation Sans';color:#80718f;letter-spacing:-1.2px">9.1%</div>
<svg style="position:absolute;left:751.3px;top:1373.6px;" width="26" height="26" viewBox="0 0 26 26"><g fill="none" stroke="#594c6b" stroke-width="1.9" stroke-linejoin="round"><path d="M12.80 1.50 L13.23 1.54 L13.66 1.67 L14.07 1.89 L14.44 2.24 L14.67 3.18 L14.83 4.13 L15.09 4.50 L15.35 4.77 L15.62 4.97 L15.90 5.12 L16.21 5.21 L16.54 5.26 L16.91 5.25 L17.35 5.17 L18.13 4.62 L18.96 4.12 L19.47 4.13 L19.92 4.26 L20.31 4.47 L20.65 4.75 L20.93 5.09 L21.14 5.48 L21.27 5.93 L21.28 6.44 L20.78 7.27 L20.23 8.05 L20.15 8.49 L20.14 8.86 L20.19 9.19 L20.28 9.50 L20.43 9.78 L20.63 10.05 L20.90 10.31 L21.27 10.57 L22.22 10.73 L23.16 10.96 L23.51 11.33 L23.73 11.74 L23.86 12.17 L23.90 12.60 L23.86 13.03 L23.73 13.46 L23.51 13.87 L23.16 14.24 L22.22 14.47 L21.27 14.63 L20.90 14.89 L20.63 15.15 L20.43 15.42 L20.28 15.70 L20.19 16.01 L20.14 16.34 L20.15 16.71 L20.23 17.15 L20.78 17.93 L21.28 18.76 L21.27 19.27 L21.14 19.72 L20.93 20.11 L20.65 20.45 L20.31 20.73 L19.92 20.94 L19.47 21.07 L18.96 21.08 L18.13 20.58 L17.35 20.03 L16.91 19.95 L16.54 19.94 L16.21 19.99 L15.90 20.08 L15.62 20.23 L15.35 20.43 L15.09 20.70 L14.83 21.07 L14.67 22.02 L14.44 22.96 L14.07 23.31 L13.66 23.53 L13.23 23.66 L12.80 23.70 L12.37 23.66 L11.94 23.53 L11.53 23.31 L11.16 22.96 L10.93 22.02 L10.77 21.07 L10.51 20.70 L10.25 20.43 L9.98 20.23 L9.70 20.08 L9.39 19.99 L9.06 19.94 L8.69 19.95 L8.25 20.03 L7.47 20.58 L6.64 21.08 L6.13 21.07 L5.68 20.94 L5.29 20.73 L4.95 20.45 L4.67 20.11 L4.46 19.72 L4.33 19.27 L4.32 18.76 L4.82 17.93 L5.37 17.15 L5.45 16.71 L5.46 16.34 L5.41 16.01 L5.32 15.70 L5.17 15.42 L4.97 15.15 L4.70 14.89 L4.33 14.63 L3.38 14.47 L2.44 14.24 L2.09 13.87 L1.87 13.46 L1.74 13.03 L1.70 12.60 L1.74 12.17 L1.87 11.74 L2.09 11.33 L2.44 10.96 L3.38 10.73 L4.33 10.57 L4.70 10.31 L4.97 10.05 L5.17 9.78 L5.32 9.50 L5.41 9.19 L5.46 8.86 L5.45 8.49 L5.37 8.05 L4.82 7.27 L4.32 6.44 L4.33 5.93 L4.46 5.48 L4.67 5.09 L4.95 4.75 L5.29 4.47 L5.68 4.26 L6.13 4.13 L6.64 4.12 L7.47 4.62 L8.25 5.17 L8.69 5.25 L9.06 5.26 L9.39 5.21 L9.70 5.12 L9.98 4.97 L10.25 4.77 L10.51 4.50 L10.77 4.13 L10.93 3.18 L11.16 2.24 L11.53 1.89 L11.94 1.67 L12.37 1.54 Z"/><circle cx="12.8" cy="12.6" r="3.2"/></g></svg>
<div style="position:absolute;left:808px;top:1374px;width:24px;height:24px;border-radius:4px;background:#f2d3d3"></div>
<svg style="position:absolute;left:843px;top:1378px;" width="14" height="16" viewBox="0 0 14 16"><path d="M4 2.2 L10.2 7.8 L4 13.5" fill="none" stroke="#3e3446" stroke-width="2" stroke-linecap="round" stroke-linejoin="round"/></svg>
<div style="position:absolute;left:863.0px;top:1373.6px;font-family:'Liberation Sans', sans-serif;font-size:24px;line-height:24px;font-weight:400;color:#3e3446;white-space:pre;letter-spacing:1.998px;">_recv</div>
<div style="position:absolute;left:432px;top:1410px;width:30px;height:46px;background:#fdf6e3;"></div>
<div style="position:absolute;left:432px;top:1456px;width:30px;height:2px;background:#f2c94c;"></div>
<div style="position:absolute;left:760px;top:1410px;width:30px;height:46px;background:#fdf6e3;"></div>
<div style="position:absolute;left:760px;top:1456px;width:30px;height:2px;background:#f2c94c;"></div>
<div style="position:absolute;left:140px;top:1421.6px;width:198px;text-align:right;font:400 24px/24px 'Liberation Sans';color:#3e3446;letter-spacing:-0.3px">9.99ms</div>
<div style="position:absolute;left:300px;top:1421.6px;width:144px;text-align:right;font:400 24px/24px 'Liberation Sans';color:#80718f;letter-spacing:-1.2px">9.1%</div>
<div style="position:absolute;left:432px;top:1421.6px;width:198px;text-align:right;font:400 24px/24px 'Liberation Sans';color:#3e3446;letter-spacing:-0.3px">9.99ms</div>
<div style="position:absolute;left:600px;top:1421.6px;width:136px;text-align:right;font:400 24px/24px 'Liberation Sans';color:#80718f;letter-spacing:-1.2px">9.1%</div>
<svg style="position:absolute;left:751px;top:1421px;" width="26" height="26" viewBox="0 0 26 26"><g fill="none" stroke="#594c6b" stroke-width="1.9" stroke-linejoin="round"><ellipse cx="12.8" cy="7.7" rx="5" ry="6.2"/><path d="M1.2 24.3 V21 Q1.2 15.5 6.7 15.5 H18.9 Q24.4 15.5 24.4 21 V24.3 Z"/></g></svg>
<div style="position:absolute;left:808px;top:1422px;width:24px;height:24px;border-radius:4px;background:#d1d1f4"></div>
<svg style="position:absolute;left:843px;top:1426px;" width="14" height="16" viewBox="0 0 14 16"><path d="M4 2.2 L10.2 7.8 L4 13.5" fill="none" stroke="#3e3446" stroke-width="2" stroke-linecap="round" stroke-linejoin="round"/></svg>
<div style="position:absolute;left:863.0px;top:1421.6px;font-family:'Liberation Sans', sans-serif;font-size:24px;line-height:24px;font-weight:400;color:#3e3446;white-space:pre;letter-spacing:0.974px;">md5hash</div>
<div style="position:absolute;left:432px;top:1458px;width:30px;height:46px;background:#fdf6e3;"></div>
<div style="position:absolute;left:432px;top:1504px;width:30px;height:2px;background:#f2c94c;"></div>
<div style="position:absolute;left:760px;top:1458px;width:30px;height:46px;background:#fdf6e3;"></div>
<div style="position:absolute;left:760px;top:1504px;width:30px;height:2px;background:#f2c94c;"></div>
<div style="position:absolute;left:140px;top:1469.6px;width:198px;text-align:right;font:400 24px/24px 'Liberation Sans';color:#3e3446;letter-spacing:-0.3px">9.99ms</div>
<div style="position:absolute;left:300px;top:1469.6px;width:144px;text-align:right;font:400 24px/24px 'Liberation Sans';color:#80718f;letter-spacing:-1.2px">9.1%</div>
<div style="position:absolute;left:432px;top:1469.6px;width:198px;text-align:right;font:400 24px/24px 'Liberation Sans';color:#3e3446;letter-spacing:-0.3px">9.99ms</div>
<div style="position:absolute;left:600px;top:1469.6px;width:136px;text-align:right;font:400 24px/24px 'Liberation Sans';color:#80718f;letter-spacing:-1.2px">9.1%</div>
<svg style="position:absolute;left:751.3px;top:1469.6px;" width="26" height="26" viewBox="0 0 26 26"><g fill="none" stroke="#594c6b" stroke-width="1.9" stroke-linejoin="round"><path d="M12.80 1.50 L13.23 1.54 L13.66 1.67 L14.07 1.89 L14.44 2.24 L14.67 3.18 L14.83 4.13 L15.09 4.50 L15.35 4.77 L15.62 4.97 L15.90 5.12 L16.21 5.21 L16.54 5.26 L16.91 5.25 L17.35 5.17 L18.13 4.62 L18.96 4.12 L19.47 4.13 L19.92 4.26 L20.31 4.47 L20.65 4.75 L20.93 5.09 L21.14 5.48 L21.27 5.93 L21.28 6.44 L20.78 7.27 L20.23 8.05 L20.15 8.49 L20.14 8.86 L20.19 9.19 L20.28 9.50 L20.43 9.78 L20.63 10.05 L20.90 10.31 L21.27 10.57 L22.22 10.73 L23.16 10.96 L23.51 11.33 L23.73 11.74 L23.86 12.17 L23.90 12.60 L23.86 13.03 L23.73 13.46 L23.51 13.87 L23.16 14.24 L22.22 14.47 L21.27 14.63 L20.90 14.89 L20.63 15.15 L20.43 15.42 L20.28 15.70 L20.19 16.01 L20.14 16.34 L20.15 16.71 L20.23 17.15 L20.78 17.93 L21.28 18.76 L21.27 19.27 L21.14 19.72 L20.93 20.11 L20.65 20.45 L20.31 20.73 L19.92 20.94 L19.47 21.07 L18.96 21.08 L18.13 20.58 L17.35 20.03 L16.91 19.95 L16.54 19.94 L16.21 19.99 L15.90 20.08 L15.62 20.23 L15.35 20.43 L15.09 20.70 L14.83 21.07 L14.67 22.02 L14.44 22.96 L14.07 23.31 L13.66 23.53 L13.23 23.66 L12.80 23.70 L12.37 23.66 L11.94 23.53 L11.53 23.31 L11.16 22.96 L10.93 22.02 L10.77 21.07 L10.51 20.70 L10.25 20.43 L9.98 20.23 L9.70 20.08 L9.39 19.99 L9.06 19.94 L8.69 19.95 L8.25 20.03 L7.47 20.58 L6.64 21.08 L6.13 21.07 L5.68 20.94 L5.29 20.73 L4.95 20.45 L4.67 20.11 L4.46 19.72 L4.33 19.27 L4.32 18.76 L4.82 17.93 L5.37 17.15 L5.45 16.71 L5.46 16.34 L5.41 16.01 L5.32 15.70 L5.17 15.42 L4.97 15.15 L4.70 14.89 L4.33 14.63 L3.38 14.47 L2.44 14.24 L2.09 13.87 L1.87 13.46 L1.74 13.03 L1.70 12.60 L1.74 12.17 L1.87 11.74 L2.09 11.33 L2.44 10.96 L3.38 10.73 L4.33 10.57 L4.70 10.31 L4.97 10.05 L5.17 9.78 L5.32 9.50 L5.41 9.19 L5.46 8.86 L5.45 8.49 L5.37 8.05 L4.82 7.27 L4.32 6.44 L4.33 5.93 L4.46 5.48 L4.67 5.09 L4.95 4.75 L5.29 4.47 L5.68 4.26 L6.13 4.13 L6.64 4.12 L7.47 4.62 L8.25 5.17 L8.69 5.25 L9.06 5.26 L9.39 5.21 L9.70 5.12 L9.98 4.97 L10.25 4.77 L10.51 4.50 L10.77 4.13 L10.93 3.18 L11.16 2.24 L11.53 1.89 L11.94 1.67 L12.37 1.54 Z"/><circle cx="12.8" cy="12.6" r="3.2"/></g></svg>
<div style="position:absolute;left:808px;top:1470px;width:24px;height:24px;border-radius:4px;background:#f2d3d3"></div>
<svg style="position:absolute;left:843px;top:1474px;" width="14" height="16" viewBox="0 0 14 16"><path d="M4 2.2 L10.2 7.8 L4 13.5" fill="none" stroke="#3e3446" stroke-width="2" stroke-linecap="round" stroke-linejoin="round"/></svg>
<div style="position:absolute;left:136px;top:1426px;width:2850px;height:40px;background:linear-gradient(rgba(246,246,248,0),rgba(246,246,248,0.55))"></div>
<div style="position:absolute;left:2469px;top:1110px;width:2px;height:356px;background:#e0dce5;"></div>
<div style="position:absolute;left:2471px;top:1110px;width:515px;height:58px;background:#f6f6f8;"></div>
<div style="position:absolute;left:2471px;top:1168px;width:515px;height:2px;background:#e0dce5;"></div>
<div style="position:absolute;left:2486.0px;top:1126.6px;font-family:'Liberation Sans', sans-serif;font-size:24px;line-height:24px;font-weight:700;color:#3e3446;white-space:pre;letter-spacing:0.740px;">Trace</div>
<div style="position:absolute;left:2486px;top:1164px;width:64px;height:4px;background:#6c5fc7;"></div>
<div style="position:absolute;left:2570.0px;top:1126.6px;font-family:'Liberation Sans', sans-serif;font-size:24px;line-height:24px;font-weight:400;color:#3e3446;white-space:pre;letter-spacing:0.795px;">Environment</div>
<div style="position:absolute;left:2486.0px;top:1176.6px;font-family:'Liberation Sans', sans-serif;font-size:24px;line-height:24px;font-weight:700;color:#3e3446;white-space:pre;letter-spacing:0.152px;">Transaction:</div>
<div style="position:absolute;left:2486.0px;top:1210.6px;font-family:'Liberation Sans', sans-serif;font-size:24px;line-height:24px;font-weight:700;color:#3e3446;white-space:pre;letter-spacing:0.157px;">Timestamp:</div>
<div style="position:absolute;left:2486.0px;top:1243.6px;font-family:'Liberation Sans', sans-serif;font-size:24px;line-height:24px;font-weight:700;color:#3e3446;white-space:pre;letter-spacing:0.332px;">Project:</div>
<div style="position:absolute;left:2486.0px;top:1277.6px;font-family:'Liberation Sans', sans-serif;font-size:24px;line-height:24px;font-weight:700;color:#3e3446;white-space:pre;letter-spacing:-0.293px;">Release:</div>
<div style="position:absolute;left:2486.0px;top:1310.6px;font-family:'Liberation Sans', sans-serif;font-size:24px;line-height:24px;font-weight:700;color:#3e3446;white-space:pre;letter-spacing:0.272px;">Environment:</div>
<div style="position:absolute;left:2486.0px;top:1344.6px;font-family:'Liberation Sans', sans-serif;font-size:24px;line-height:24px;font-weight:700;color:#3e3446;white-space:pre;letter-spacing:0.128px;">Duration:</div>
<div style="position:absolute;left:2486.0px;top:1378.6px;font-family:'Liberation Sans', sans-serif;font-size:24px;line-height:24px;font-weight:700;color:#3e3446;white-space:pre;letter-spacing:-0.097px;">Threads:</div>
<div style="position:absolute;left:2638.0px;top:1176.6px;font-family:'Liberation Sans', sans-serif;font-size:24px;line-height:24px;font-weight:400;color:#2562d4;white-space:pre;letter-spacing:0.907px;">/api/0/organizations/{organ…</div>
<div style="position:absolute;left:2631.0px;top:1210.6px;font-family:'Liberation Sans', sans-serif;font-size:24px;line-height:24px;font-weight:400;color:#3e3446;white-space:pre;letter-spacing:0.041px;">Apr 2, 10:05 AM</div>
<div style="position:absolute;left:2585px;top:1244px;width:24px;height:24px;background:#5b8de8;border-radius:5px"></div>
<svg style="position:absolute;left:2585px;top:1244px;" width="24" height="24" viewBox="0 0 24 24"><path d="M11.5 3.5 C8 3.5 7.6 5 7.6 6.2 V8 H12 V9 H5.6 C4 9 3.4 10.5 3.4 12.3 C3.4 14.2 4 15.6 5.6 15.6 H7 V13.6 C7 12.2 8.2 11.2 9.6 11.2 H13.6 C14.8 11.2 15.8 10.2 15.8 9 V6.2 C15.8 4.8 14.6 3.5 11.5 3.5 Z" fill="#ffffff"/><path d="M12.5 20.5 C16 20.5 16.4 19 16.4 17.8 V16 H12 V15 H18.4 C20 15 20.6 13.5 20.6 11.7 C20.6 9.8 20 8.4 18.4 8.4 H17 V10.4 C17 11.8 15.8 12.8 14.4 12.8 H10.4 C9.2 12.8 8.2 13.8 8.2 15 V17.8 C8.2 19.2 9.4 20.5 12.5 20.5 Z" fill="#ffffff"/></svg>
<div style="position:absolute;left:2617.0px;top:1243.6px;font-family:'Liberation Sans', sans-serif;font-size:24px;line-height:24px;font-weight:400;color:#2562d4;white-space:pre;letter-spacing:1.464px;">sentry</div>
<div style="position:absolute;left:2591.0px;top:1277.6px;font-family:'Liberation Sans', sans-serif;font-size:24px;line-height:24px;font-weight:400;color:#2562d4;white-space:pre;letter-spacing:1.229px;text-decoration:underline dotted;text-underline-offset:5px;">87aab1d9cfa0</div>
<div style="position:absolute;left:2651.0px;top:1310.6px;font-family:'Liberation Sans', sans-serif;font-size:24px;line-height:24px;font-weight:400;color:#3e3446;white-space:pre;">de</div>
<div style="position:absolute;left:2602.0px;top:1344.6px;font-family:'Liberation Sans', sans-serif;font-size:24px;line-height:24px;font-weight:400;color:#3e3446;white-space:pre;letter-spacing:-0.135px;">119.28ms</div>
<div style="position:absolute;left:2595.0px;top:1378.6px;font-family:'Liberation Sans', sans-serif;font-size:24px;line-height:24px;font-weight:400;color:#3e3446;white-space:pre;">20</div>
<div style="position:absolute;left:0;top:0;width:136px;height:1466px;background:linear-gradient(294.17deg,#2f1937 35.57%,#452650 92.42%,#452650 92.42%);"></div>
<div style="position:absolute;left:34px;top:38px;width:64px;height:64px;border-radius:9px;background:linear-gradient(225deg,#7f6aa8 0%,#6d4b89 28%,#67468a 55%,#54406e 78%,#3d3050 100%);"></div>
<svg style="position:absolute;left:34px;top:38px;" width="64" height="64" viewBox="0 0 64 64"><path d="M29,2.26a4.67,4.67,0,0,0-8,0L14.42,13.53A32.21,32.21,0,0,1,32.17,40.19H27.55A27.68,27.68,0,0,0,12.09,17.47L6,28a15.92,15.92,0,0,1,9.23,12.17H4.62A.76.76,0,0,1,4,39.06l2.94-5a10.74,10.74,0,0,0-3.36-1.9l-2.91,5a4.54,4.54,0,0,0,1.69,6.24A4.66,4.66,0,0,0,4.62,44H19.15a19.4,19.4,0,0,0-8-17.31l2.31-4A23.87,23.87,0,0,1,23.76,44H36.07a35.88,35.88,0,0,0-16.41-31.8l4.67-8a.77.77,0,0,1,1.05-.27c.53.29,20.290,34.77,20.66,35.17a.76.76,0,0,1-.68,1.13H40.6q.09,1.91,0,3.81h4.78A4.59,4.59,0,0,0,50,39.43a4.49,4.49,0,0,0-.62-2.28Z" fill="#fff" transform="translate(11.5,11.9) scale(0.81)"/></svg>
<svg style="position:absolute;left:47px;top:150px;" width="36" height="36" viewBox="0 0 36 36"><g fill="none" stroke="#9586a5" stroke-width="3" stroke-linecap="round" stroke-linejoin="round"><rect x="1.7" y="1.6" width="32.4" height="32.8" rx="5"/><line x1="1.7" y1="9.7" x2="34.1" y2="9.7"/><path d="M1.7 17.5 H10.5 V25.4 H25.7 V17.5 H34.1"/></g></svg>
<svg style="position:absolute;left:47px;top:212px;" width="36" height="36" viewBox="0 0 36 36"><g fill="none" stroke="#9586a5" stroke-width="3" stroke-linecap="round" stroke-linejoin="round"><path d="M1.8 1.6 H13 L19.5 6.7 H34 V34 H1.8 Z"/><path d="M13.4 15.8 L7.2 21 L13.4 25.7"/><path d="M22.4 15.8 L29 21 L22.4 25.7"/></g></svg>
<div style="position:absolute;left:28px;top:294px;width:74px;height:60px;border-radius:11px;background:rgba(255,255,255,0.14);"></div>
<div style="position:absolute;left:0;top:302px;width:4px;height:40px;border-radius:0 4px 4px 0;background:#6c5fc7;"></div>
<svg style="position:absolute;left:47px;top:306px;" width="36" height="36" viewBox="0 0 36 36"><g fill="none" stroke="#ffffff" stroke-width="3.3" stroke-linecap="round" stroke-linejoin="round"><circle cx="13.4" cy="13.2" r="11.6"/><line x1="22.2" y1="22.5" x2="35" y2="35"/></g></svg>
<svg style="position:absolute;left:47px;top:368px;" width="36" height="36" viewBox="0 0 36 36"><g fill="none" stroke="#9586a5" stroke-width="3" stroke-linecap="round" stroke-linejoin="round"><path d="M1 17.4 L9.8 34.6 L26.3 1.2 L34.9 19"/></g></svg>
<svg style="position:absolute;left:47px;top:462px;" width="36" height="36" viewBox="0 0 36 36"><g fill="none" stroke="#9586a5" stroke-width="3" stroke-linecap="round" stroke-linejoin="round"><path d="M1.8 6.5 H15.5 L21.9 1.7 H28.2 V25 H21.9 L15.5 19.9 H1.8 Z"/><path d="M3.7 19.9 V34.1 H11.6 V19.9"/><path d="M28.2 8.4 A5 5 0 0 1 28.2 18.4"/></g></svg>
<svg style="position:absolute;left:47px;top:524px;" width="36" height="36" viewBox="0 0 36 36"><g fill="none" stroke="#9586a5" stroke-width="3" stroke-linecap="round" stroke-linejoin="round"><path d="M2.2 15.5 A16 16 0 1 1 6.5 28.5"/><path d="M2.2 33 V22.8 H12"/><path d="M2.2 22.8 L6.5 28.5"/><path d="M18 8.3 V18.3 L25.3 25"/></g></svg>
<svg style="position:absolute;left:47px;top:586px;" width="36" height="36" viewBox="0 0 36 36"><g fill="none" stroke="#9586a5" stroke-width="3" stroke-linecap="round" stroke-linejoin="round"><line x1="17.5" y1="0.8" x2="17.5" y2="5.4"/><line x1="6.2" y1="2.2" x2="9.8" y2="6.7"/><line x1="28.9" y1="2.2" x2="25.7" y2="6.7"/><line x1="0.7" y1="11.7" x2="5.3" y2="11.7"/><line x1="30.3" y1="11.7" x2="34.8" y2="11.7"/><path d="M6.6 25.4 L9.8 11.5 Q10.3 9.9 12 9.9 H23.5 Q25.2 9.9 25.7 11.5 L29.4 25.4"/><rect x="1.6" y="25.4" width="32.8" height="9.4" rx="2"/><circle cx="17.5" cy="19" r="3.2"/><line x1="17.5" y1="22.2" x2="17.5" y2="25.4"/></g></svg>
<svg style="position:absolute;left:47px;top:648px;" width="36" height="36" viewBox="0 0 36 36"><g fill="none" stroke="#9586a5" stroke-width="3" stroke-linecap="round" stroke-linejoin="round"><rect x="1.7" y="2" width="12.6" height="32.2" rx="2.2"/><rect x="21.7" y="2" width="12.2" height="15.2" rx="2.2"/><rect x="21.7" y="25" width="12.2" height="9.2" rx="2.2"/></g></svg>
<svg style="position:absolute;left:47px;top:710px;" width="36" height="36" viewBox="0 0 36 36"><g fill="none" stroke="#9586a5" stroke-width="3" stroke-linecap="round" stroke-linejoin="round"><rect x="1.7" y="13.9" width="32.6" height="20.1" rx="2.5"/><path d="M4.5 13.9 V7.6 H31.4 V13.9"/><path d="M7.5 7.6 V1.9 H28 V7.6"/></g></svg>
<svg style="position:absolute;left:47px;top:804px;" width="36" height="36" viewBox="0 0 36 36"><g fill="none" stroke="#9586a5" stroke-width="3" stroke-linecap="round" stroke-linejoin="round"><rect x="1.9" y="1.8" width="32.2" height="32.6" rx="4"/><line x1="8" y1="19.6" x2="8" y2="33"/><line x1="14.8" y1="19.6" x2="14.8" y2="33"/><line x1="21.4" y1="16.5" x2="21.4" y2="33"/><line x1="28" y1="9.6" x2="28" y2="33"/></g></svg>
<svg style="position:absolute;left:47px;top:866px;" width="36" height="36" viewBox="0 0 36 36"><g fill="none" stroke="#9586a5" stroke-width="3" stroke-linecap="round" stroke-linejoin="round"><path d="M18.00 2.00 L18.63 2.06 L19.24 2.24 L19.83 2.55 L20.37 3.05 L20.71 4.37 L20.96 5.69 L21.32 6.21 L21.71 6.60 L22.10 6.89 L22.52 7.10 L22.96 7.24 L23.44 7.32 L23.98 7.31 L24.62 7.20 L25.72 6.44 L26.90 5.75 L27.63 5.79 L28.27 5.98 L28.83 6.29 L29.31 6.69 L29.71 7.17 L30.02 7.73 L30.21 8.37 L30.25 9.10 L29.56 10.28 L28.80 11.38 L28.69 12.02 L28.68 12.56 L28.76 13.04 L28.90 13.48 L29.11 13.90 L29.40 14.29 L29.79 14.68 L30.31 15.04 L31.63 15.29 L32.95 15.63 L33.45 16.17 L33.76 16.76 L33.94 17.37 L34.00 18.00 L33.94 18.63 L33.76 19.24 L33.45 19.83 L32.95 20.37 L31.63 20.71 L30.31 20.96 L29.79 21.32 L29.40 21.71 L29.11 22.10 L28.90 22.52 L28.76 22.96 L28.68 23.44 L28.69 23.98 L28.80 24.62 L29.56 25.72 L30.25 26.90 L30.21 27.63 L30.02 28.27 L29.71 28.83 L29.31 29.31 L28.83 29.71 L28.27 30.02 L27.63 30.21 L26.90 30.25 L25.72 29.56 L24.62 28.80 L23.98 28.69 L23.44 28.68 L22.96 28.76 L22.52 28.90 L22.10 29.11 L21.71 29.40 L21.32 29.79 L20.96 30.31 L20.71 31.63 L20.37 32.95 L19.83 33.45 L19.24 33.76 L18.63 33.94 L18.00 34.00 L17.37 33.94 L16.76 33.76 L16.17 33.45 L15.63 32.95 L15.29 31.63 L15.04 30.31 L14.68 29.79 L14.29 29.40 L13.90 29.11 L13.48 28.90 L13.04 28.76 L12.56 28.68 L12.02 28.69 L11.38 28.80 L10.28 29.56 L9.10 30.25 L8.37 30.21 L7.73 30.02 L7.17 29.71 L6.69 29.31 L6.29 28.83 L5.98 28.27 L5.79 27.63 L5.75 26.90 L6.44 25.72 L7.20 24.62 L7.31 23.98 L7.32 23.44 L7.24 22.96 L7.10 22.52 L6.89 22.10 L6.60 21.71 L6.21 21.32 L5.69 20.96 L4.37 20.71 L3.05 20.37 L2.55 19.83 L2.24 19.24 L2.06 18.63 L2.00 18.00 L2.06 17.37 L2.24 16.76 L2.55 16.17 L3.05 15.63 L4.37 15.29 L5.69 15.04 L6.21 14.68 L6.60 14.29 L6.89 13.90 L7.10 13.48 L7.24 13.04 L7.32 12.56 L7.31 12.02 L7.20 11.38 L6.44 10.28 L5.75 9.10 L5.79 8.37 L5.98 7.73 L6.29 7.17 L6.69 6.69 L7.17 6.29 L7.73 5.98 L8.37 5.79 L9.10 5.75 L10.28 6.44 L11.38 7.20 L12.02 7.31 L12.56 7.32 L13.04 7.24 L13.48 7.10 L13.90 6.89 L14.29 6.60 L14.68 6.21 L15.04 5.69 L15.29 4.37 L15.63 3.05 L16.17 2.55 L16.76 2.24 L17.37 2.06 Z"/><circle cx="18" cy="18" r="4.6"/></g></svg>
<svg style="position:absolute;left:47px;top:1268px;" width="36" height="36" viewBox="0 0 36 36"><g fill="none" stroke="#9586a5" stroke-width="3" stroke-linecap="round" stroke-linejoin="round"><circle cx="18" cy="17.8" r="16.3"/><path d="M13 15 A5.1 5.1 0 1 1 20.8 19 Q18.2 20.5 18.2 22"/><circle cx="18.2" cy="25.6" r="0.6" fill="#9586a5"/></g></svg>
<svg style="position:absolute;left:47px;top:1330px;" width="36" height="36" viewBox="0 0 36 36"><g fill="none" stroke="#9586a5" stroke-width="3" stroke-linecap="round" stroke-linejoin="round"><circle cx="18" cy="17.8" r="3.4"/><path d="M11.7 10.3 A9.8 9.8 0 0 0 11.7 25.3"/><path d="M24.3 10.3 A9.8 9.8 0 0 1 24.3 25.3"/><path d="M5.8 5.6 A17.2 17.2 0 0 0 5.8 30"/><path d="M30.2 5.6 A17.2 17.2 0 0 1 30.2 30"/></g></svg>
<div style="position:absolute;left:79.5px;top:1320px;width:22px;height:22px;border-radius:50%;background:#f55459;"></div>
<svg style="position:absolute;left:56px;top:1428px;" width="20" height="28" viewBox="0 0 20 28"><path d="M4.5 3 L15 13.8 L4.5 24.5" fill="none" stroke="#9586a5" stroke-width="3" stroke-linecap="round" stroke-linejoin="round"/></svg>
</body></html>
